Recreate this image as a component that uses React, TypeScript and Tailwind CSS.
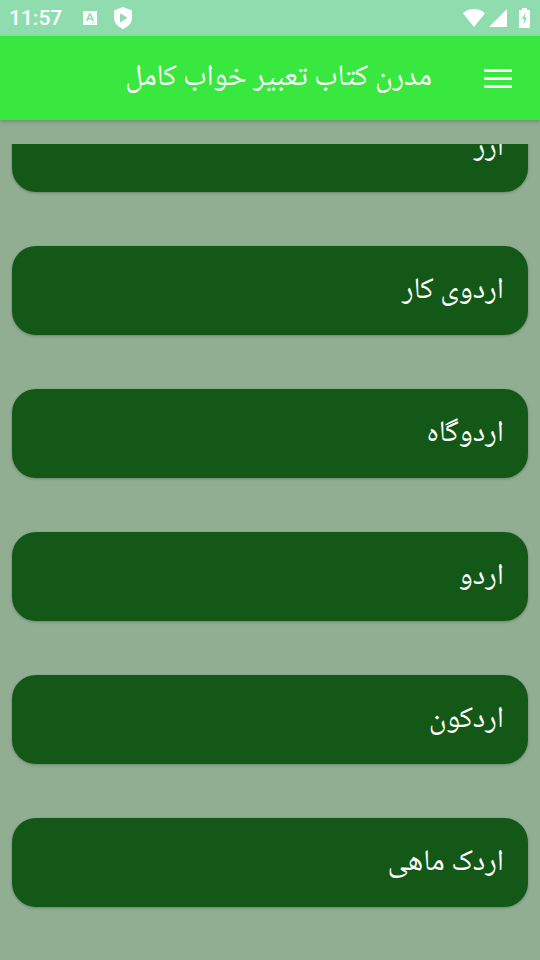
const items = ["اردوی کار", "اردوگاه", "اردو", "اردکون", "اردک ماهی"];

function Card({ label, className = "" }: { label: string; className?: string }) {
  return (
    <div className={"flex h-[89px] shrink-0 items-center justify-end rounded-[24px] bg-[#135816] px-6 shadow-[0_1px_3px_rgba(0,0,0,0.25)] " + className}>
      <span dir="rtl" className="pt-0.5 text-[30px] leading-none text-white">
        {label}
      </span>
    </div>
  );
}

export default function App() {
  return (
    <div className="flex h-[960px] w-[540px] flex-col overflow-hidden bg-[#91ae93] font-['Noto_Naskh_Arabic',serif]">
      {/* Status bar */}
      <div className="flex h-9 shrink-0 items-center justify-between bg-[#8fddaf] pl-[9px] pr-[10px] text-white">
        <div className="flex items-center">
          <span className="font-['Roboto',sans-serif] text-[21px] font-medium leading-none">11:57</span>
          <svg width="16" height="16" viewBox="0 0 16 16" className="ml-[20px]">
            <path fill="#fff" d="M1 1h14v14H1z" />
            <path fill="#8fddaf" d="M6.9 3.5h2.2L12 11h-1.9l-.5-1.5H6.4L5.9 11H4zM6.9 8h2.2L8 5z" />
            <path fill="#8fddaf" d="M10 12.5h1v1h-1zM12 12.5h1v1h-1z" />
          </svg>
          <svg width="18" height="22" viewBox="0 0 18 22" className="ml-[16px]">
            <path fill="#fff" d="M9 0 18 3.4v7.2C18 16 14.2 20.2 9 22 3.8 20.2 0 16 0 10.6V3.4z" />
            <path fill="#8fddaf" d="M6 6.2 13.5 10.8 6 15.4z" />
          </svg>
        </div>
        <div className="flex items-center">
          <svg width="22" height="18" viewBox="0 0 22 18">
            <path fill="#fff" d="M11 18 0 4.2C3 1.6 6.8 0 11 0s8 1.6 11 4.2z" />
          </svg>
          <svg width="18" height="18" viewBox="0 0 18 18" className="ml-[4px]">
            <path fill="#fff" d="M18 0v18H0z" />
          </svg>
          <svg width="11" height="20" viewBox="0 0 11 20" className="ml-[12px]">
            <path fill="#fff" d="M3 0h5v2h3v18H0V2h3z" />
            <path fill="#8fddaf" d="M6.6 4 3 11h2.2L4.4 17 8 9.5H5.8z" />
          </svg>
        </div>
      </div>

      {/* App bar */}
      <div className="z-10 flex h-[84px] shrink-0 items-center justify-end bg-[#38e83e] pr-[28px] shadow-[0_2px_4px_rgba(0,0,0,0.2)]">
        <span dir="rtl" className="pt-0.5 text-[30px] leading-none text-white">
          مدرن کتاب تعبیر خواب کامل
        </span>
        <div className="ml-[52px] flex w-[28px] flex-col gap-[5px]">
          <div className="h-[3px] bg-white" />
          <div className="h-[3px] bg-white" />
          <div className="h-[3px] bg-white" />
        </div>
      </div>

      {/* List, scrolled so the first card is cut at the top */}
      <div className="mt-6 flex flex-1 flex-col gap-[54px] overflow-hidden px-3">
        <Card label="ارر" className="-mt-[41px]" />
        {items.map((item) => (
          <Card key={item} label={item} />
        ))}
      </div>
    </div>
  );
}
